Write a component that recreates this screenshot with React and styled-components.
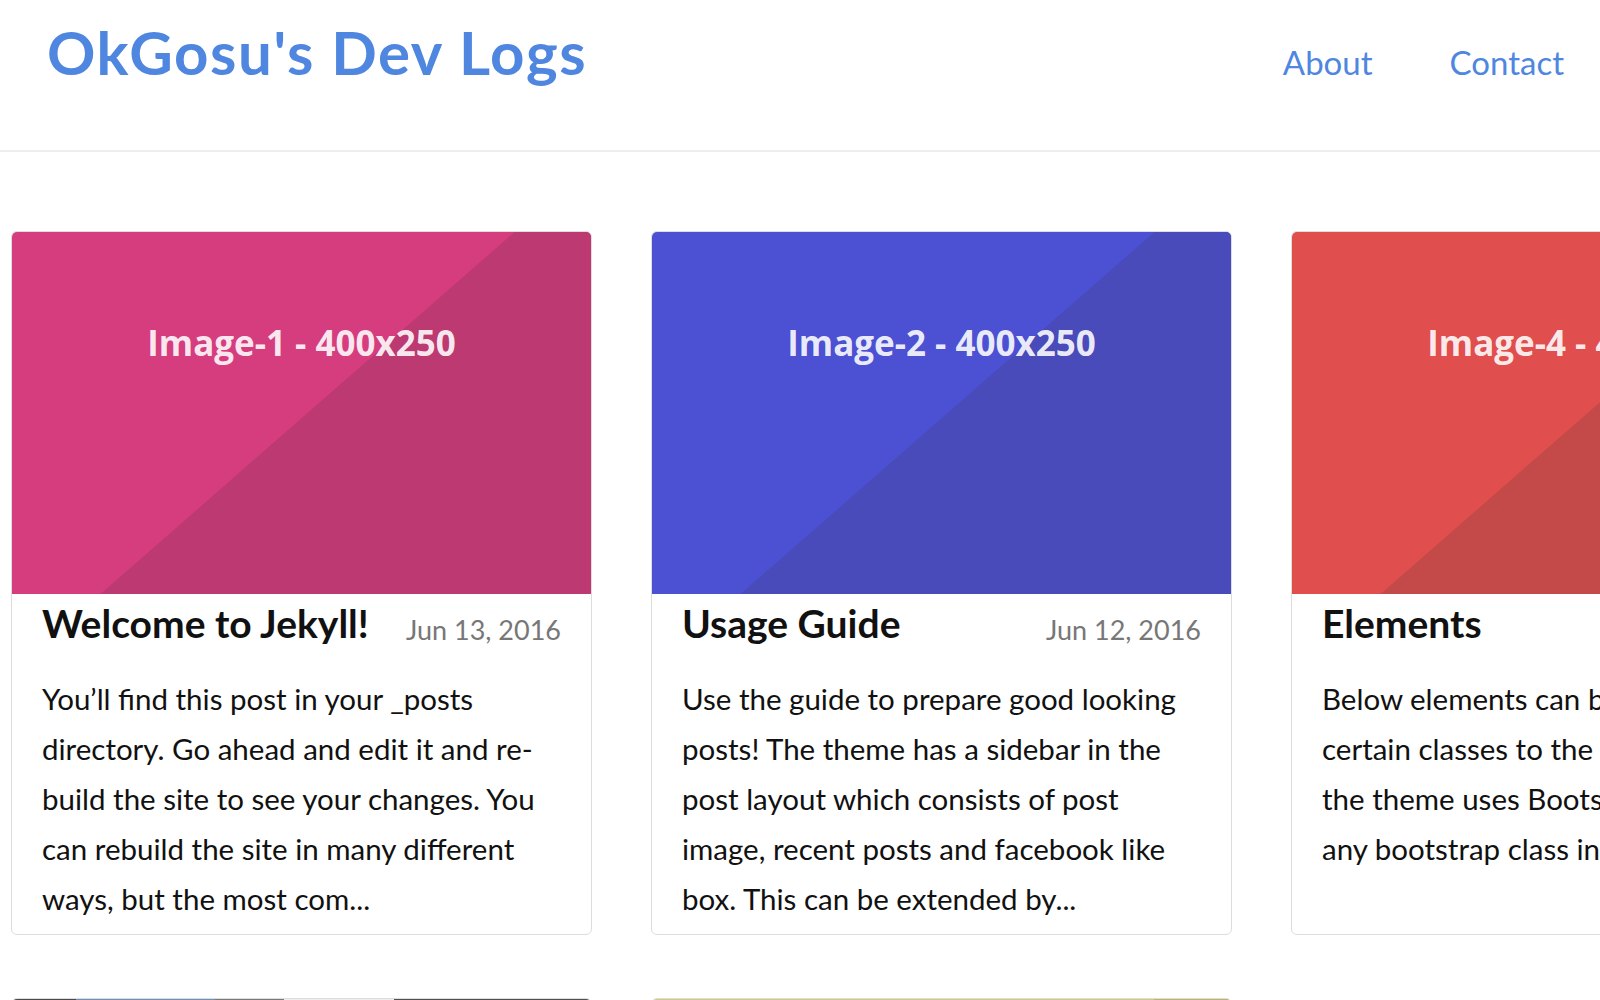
import styled, { createGlobalStyle } from "styled-components";

const posts = [
  {
    label: "Image-1 - 400x250",
    light: "#d63d7e",
    dark: "#bd3971",
    title: "Welcome to Jekyll!",
    date: "Jun 13, 2016",
    excerpt:
      "You’ll find this post in your _posts directory. Go ahead and edit it and re-build the site to see your changes. You can rebuild the site in many different ways, but the most com...",
  },
  {
    label: "Image-2 - 400x250",
    light: "#4c50d2",
    dark: "#484bb9",
    title: "Usage Guide",
    date: "Jun 12, 2016",
    excerpt:
      "Use the guide to prepare good looking posts! The theme has a sidebar in the post layout which consists of post image, recent posts and facebook like box. This can be extended by...",
  },
  {
    label: "Image-4 - 400x250",
    light: "#e04e4e",
    dark: "#c44a4a",
    title: "Elements",
    date: "Jun 11, 2016",
    excerpt:
      "Below elements can be styled by adding certain classes to the elements. Since the theme uses Bootstrap, you can use any bootstrap class in this theme.",
  },
  {
    label: "",
    fill: "linear-gradient(90deg, #4a4a4a 0 11%, #6c8fbe 11% 35%, #7a7a7a 35% 47%, #eeeeee 47% 66%, #505050 66% 100%)",
    title: "Photography",
    date: "Jun 10, 2016",
    excerpt: "",
  },
  {
    label: "",
    light: "#cfcc76",
    dark: "#bdb660",
    title: "Travel Notes",
    date: "Jun 09, 2016",
    excerpt: "",
  },
];

const GlobalStyle = createGlobalStyle`
  html, body {
    margin: 0;
    padding: 0;
    background: #fff;
    overflow-x: hidden;
  }
  body {
    font-family: "Lato", "Noto Sans", sans-serif;
    color: #111;
  }
  * {
    box-sizing: border-box;
  }
`;

function App() {
  return (
    <>
      <GlobalStyle />
      <Header>
        <Logo href="#">OkGosu's Dev Logs</Logo>
        <NavList>
          <NavItem href="#">About</NavItem>
          <NavItem href="#">Contact</NavItem>
        </NavList>
      </Header>
      <Main>
        <PostGrid>
          {posts.map((post) => (
            <PostCard key={post.title}>
              <Thumb $light={post.light} $dark={post.dark} $fill={post.fill}>
                {post.label && <ThumbLabel>{post.label}</ThumbLabel>}
              </Thumb>
              <CardBody>
                <TitleRow>
                  <PostTitle>{post.title}</PostTitle>
                  <PostDate>{post.date}</PostDate>
                </TitleRow>
                <Excerpt>{post.excerpt}</Excerpt>
              </CardBody>
            </PostCard>
          ))}
        </PostGrid>
      </Main>
    </>
  );
}

const Header = styled.header`
  display: flex;
  justify-content: space-between;
  align-items: baseline;
  height: 152px;
  padding: 16px 36px 0 47px;
  border-bottom: 2px solid #eeeeee;
`;
const Logo = styled.a`
  font-size: 60px;
  font-weight: 700;
  line-height: 72px;
  color: #4f86df;
  text-decoration: none;
  letter-spacing: 1.6px;
`;
const NavList = styled.nav`
  display: flex;
  gap: 77px;
`;
const NavItem = styled.a`
  font-size: 33px;
  font-weight: 400;
  color: #4f86df;
  text-decoration: none;
`;
const Main = styled.main`
  padding: 79px 0 0 11px;
`;
const PostGrid = styled.div`
  display: grid;
  grid-template-columns: repeat(3, 581px);
  column-gap: 59px;
  row-gap: 63px;
  width: 1861px;
`;
const PostCard = styled.article`
  border: 1px solid #dddddd;
  border-radius: 6px;
  overflow: hidden;
  background: #fff;
`;
const Thumb = styled.div`
  position: relative;
  height: 362px;
  background: ${(p) => p.$fill || p.$light};
  text-align: center;

  &::before {
    content: "";
    position: absolute;
    inset: 0;
    background: ${(p) => (p.$fill ? "transparent" : p.$dark)};
    clip-path: polygon(86.8% 0, 100% 0, 100% 100%, 15.3% 100%);
  }
`;
const ThumbLabel = styled.span`
  position: relative;
  display: block;
  padding-top: 88px;
  font-family: "Open Sans", sans-serif;
  font-size: 35px;
  font-weight: 700;
  line-height: 46px;
  color: rgba(255, 255, 255, 0.9);
`;
const CardBody = styled.div`
  padding: 6px 30px 10px 30px;
`;
const TitleRow = styled.div`
  display: flex;
  justify-content: space-between;
  align-items: flex-end;
`;
const PostTitle = styled.h2`
  margin: 0;
  font-size: 39px;
  font-weight: 700;
  line-height: 46px;
  color: #111;
`;
const PostDate = styled.span`
  font-size: 27px;
  font-weight: 400;
  line-height: 33px;
  color: #777;
`;
const Excerpt = styled.p`
  margin: 28px 0 0;
  font-size: 29.5px;
  line-height: 50px;
  color: #111;
`;

export default App;
